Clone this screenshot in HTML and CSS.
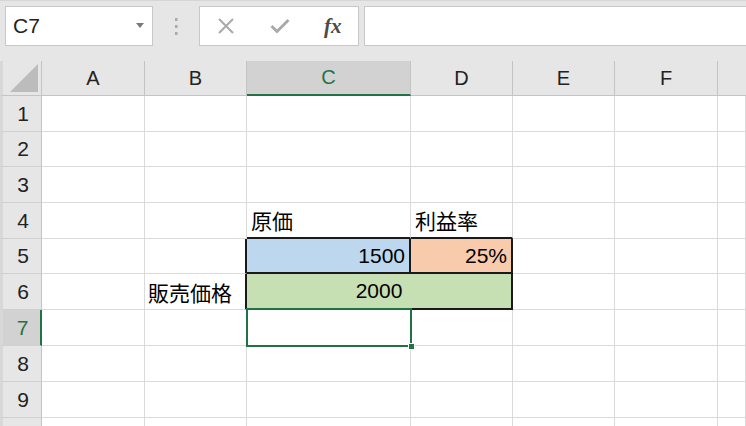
FILE: index.html
```html
<!DOCTYPE html>
<html lang="ja">
<head>
<meta charset="utf-8">
<title>Excel</title>
<link rel="stylesheet" href="styles.css">
</head>
<body>
<div class="app">
  <div class="toolbar">
    <div class="namebox">
      <span class="name">C7</span>
      <svg class="dd" width="8" height="5" viewBox="0 0 8 5"><polygon points="0,0 8,0 4,5" fill="#7a7a7a"/></svg>
    </div>
    <div class="grip">
      <svg width="4" height="18" viewBox="0 0 4 18"><rect x="1" y="1" width="2.5" height="3" fill="#a8a8a8"/><rect x="1" y="8" width="2.5" height="3" fill="#a8a8a8"/><rect x="1" y="15" width="2.5" height="3" fill="#a8a8a8"/></svg>
    </div>
    <div class="fxbox">
      <svg class="ico" width="18" height="18" viewBox="0 0 18 18"><path d="M2 2 L16 16 M16 2 L2 16" stroke="#a9a9a9" stroke-width="2" fill="none"/></svg>
      <svg class="ico" width="20" height="16" viewBox="0 0 20 16"><path d="M1.5 8 L7 13.5 L18.5 2" stroke="#a9a9a9" stroke-width="3" fill="none"/></svg>
      <span class="fx">fx</span>
    </div>
    <div class="formula"></div>
  </div>

  <div class="sheet">
    <div class="corner"><svg width="28" height="28" viewBox="0 0 28 28"><polygon points="28,0 28,28 0,28" fill="#bcbcbc"/></svg></div>
    <div class="ch">A</div>
    <div class="ch">B</div>
    <div class="ch ch-sel">C</div>
    <div class="ch">D</div>
    <div class="ch">E</div>
    <div class="ch">F</div>
    <div class="ch ch-last"></div>

    <div class="rh">1</div><div class="c"></div><div class="c"></div><div class="c"></div><div class="c"></div><div class="c"></div><div class="c"></div><div class="c"></div>
    <div class="rh">2</div><div class="c"></div><div class="c"></div><div class="c"></div><div class="c"></div><div class="c"></div><div class="c"></div><div class="c"></div>
    <div class="rh">3</div><div class="c"></div><div class="c"></div><div class="c"></div><div class="c"></div><div class="c"></div><div class="c"></div><div class="c"></div>
    <div class="rh">4</div><div class="c"></div><div class="c"></div><div class="c b-bot">原価</div><div class="c b-bot">利益率</div><div class="c"></div><div class="c"></div><div class="c"></div>
    <div class="rh">5</div><div class="c"></div><div class="c b-right"></div><div class="c num blue b-right b-bot">1500</div><div class="c num orange b-right b-bot">25%</div><div class="c"></div><div class="c"></div><div class="c"></div>
    <div class="rh">6</div><div class="c"></div><div class="c b-right label">販売価格</div><div class="c merged green b-right b-bot">2000</div><div class="c"></div><div class="c"></div><div class="c"></div>
    <div class="rh rh-sel">7</div><div class="c"></div><div class="c"></div><div class="c active"><div class="sel"><span class="handle"></span></div></div><div class="c"></div><div class="c"></div><div class="c"></div><div class="c"></div>
    <div class="rh">8</div><div class="c"></div><div class="c"></div><div class="c"></div><div class="c"></div><div class="c"></div><div class="c"></div><div class="c"></div>
    <div class="rh">9</div><div class="c"></div><div class="c"></div><div class="c"></div><div class="c"></div><div class="c"></div><div class="c"></div><div class="c"></div>
    <div class="rh"></div><div class="c"></div><div class="c"></div><div class="c"></div><div class="c"></div><div class="c"></div><div class="c"></div><div class="c"></div>
  </div>
</div>
</body>
</html>
```

FILE: styles.css
```css
* { box-sizing: border-box; }
html, body { margin: 0; padding: 0; }
body {
  width: 746px;
  height: 426px;
  overflow: hidden;
  background: #e6e6e6;
  font-family: "Liberation Sans", "Noto Sans CJK JP", sans-serif;
  color: #000;
}
.app { width: 746px; height: 426px; overflow: hidden; }

.toolbar {
  display: flex;
  align-items: flex-start;
  height: 61px;
  padding: 5px 0 0 5px;
  border-top: 1px solid #d6d6d6;
}
.namebox {
  width: 148px;
  height: 40px;
  background: #fff;
  border: 1px solid #c8c8c8;
  display: flex;
  align-items: center;
  justify-content: space-between;
  padding: 0 8px 0 7px;
}
.name { font-size: 21px; color: #222; }
.dd { margin-top: -2px; }
.grip {
  width: 46px;
  height: 40px;
  display: flex;
  align-items: center;
  justify-content: center;
}
.fxbox {
  width: 160px;
  height: 40px;
  background: #fff;
  border: 1px solid #c8c8c8;
  display: flex;
  align-items: center;
  padding-left: 17px;
}
.fxbox .ico:nth-child(1) { margin-right: 35px; }
.fxbox .ico:nth-child(2) { margin-right: 34px; }
.fx {
  font-family: "Liberation Serif", "DejaVu Serif", serif;
  font-style: italic;
  font-weight: bold;
  font-size: 21px;
  color: #4a4a4a;
}
.formula {
  flex: 1;
  height: 40px;
  margin-left: 5px;
  background: #fff;
  border: 1px solid #c8c8c8;
  border-right: none;
}

.sheet {
  display: grid;
  grid-template-columns: 42px 103px 102px 164px 102px 102px 103px 1fr;
  grid-template-rows: 35px 36px 35px 36px 36px 35px 36px 36px 36px 36px 36px;
  background: #fff;
}
.corner {
  background: #e6e6e6;
  border-left: 3px solid #d8d8d8;
  border-right: 1px solid #c4c4c4;
  border-bottom: 1px solid #c4c4c4;
  display: flex;
  align-items: flex-end;
  justify-content: flex-end;
  padding: 0 3px 3px 0;
}
.ch {
  background: #e6e6e6;
  border-right: 1px solid #c4c4c4;
  border-bottom: 1px solid #c4c4c4;
  display: flex;
  align-items: center;
  justify-content: center;
  font-size: 20px;
  color: #222;
}
.ch-sel {
  background: #d2d2d2;
  color: #217346;
  border-bottom: 2px solid #217346;
}
.ch-last { border-right: none; }
.rh {
  background: #e6e6e6;
  border-left: 3px solid #d8d8d8;
  border-right: 1px solid #c4c4c4;
  border-bottom: 1px solid #d0d0d0;
  display: flex;
  align-items: center;
  justify-content: center;
  font-size: 21px;
  color: #222;
  padding-left: 2px;
}
.rh-sel {
  background: #d2d2d2;
  color: #217346;
  border-right: 2px solid #217346;
}
.c {
  border-right: 1px solid #dadada;
  border-bottom: 1px solid #dadada;
  display: flex;
  align-items: center;
  padding: 0 4px;
  font-size: 21px;
  white-space: nowrap;
}
.num { justify-content: flex-end; }
.label { padding-left: 3px; }
.merged { grid-column: span 2; justify-content: center; }
.blue { background: #bdd7ee; }
.orange { background: #f8cbad; }
.green { background: #c6e0b4; }
.b-right { border-right: 2px solid #1a1a1a; }
.b-bot { border-bottom: 2px solid #1a1a1a; }

.active { position: relative; }
.sel {
  position: absolute;
  top: -2px;
  left: -1px;
  right: -2px;
  bottom: -2px;
  border: 2px solid #217346;
}
.handle {
  position: absolute;
  right: -5px;
  bottom: -5px;
  width: 7px;
  height: 7px;
  background: #217346;
  border: 1px solid #fff;
}
```
